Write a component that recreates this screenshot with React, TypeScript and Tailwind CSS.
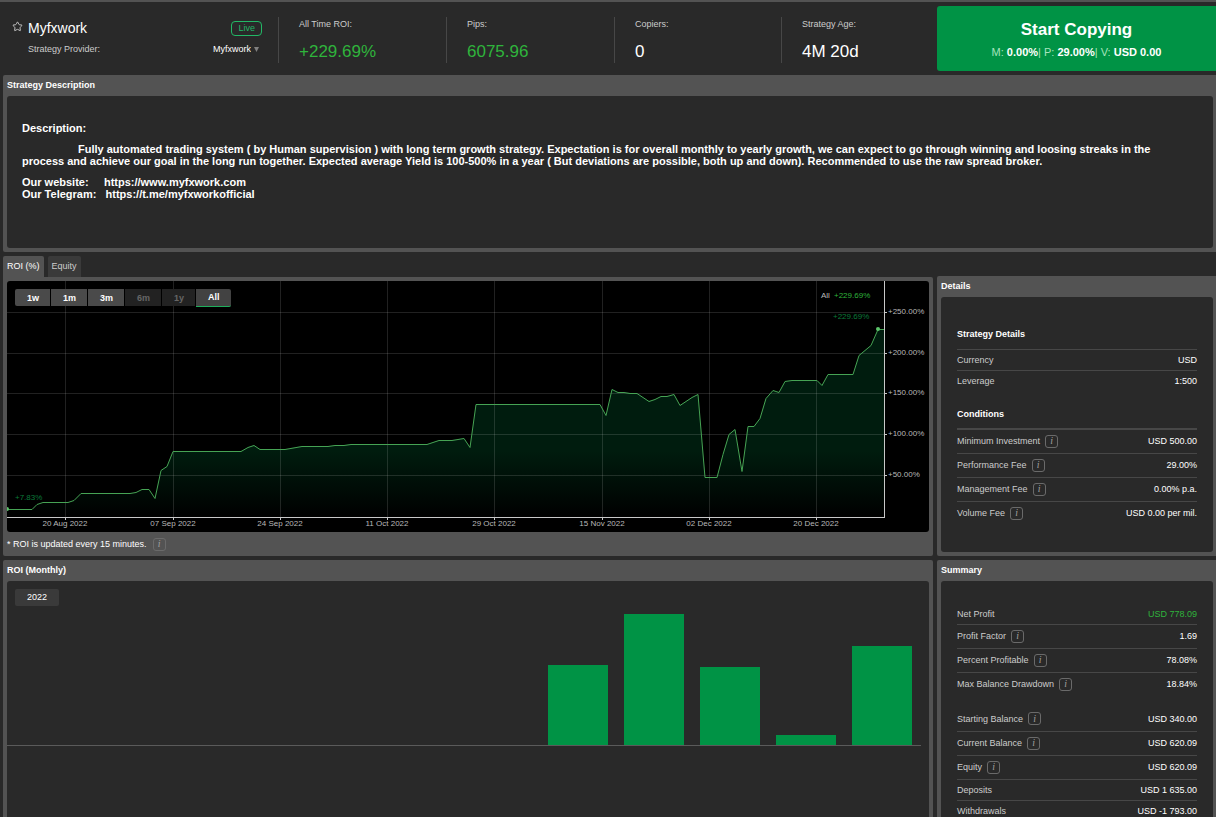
import React, { FC, ReactNode } from "react";

// icons
import { Star } from "lucide-react";

interface Row {
  label: string;
  value: string;
  info?: boolean;
  green?: boolean;
}

const stats = [
  { name: "All Time ROI:", value: "+229.69%", green: true },
  { name: "Pips:", value: "6075.96", green: true },
  { name: "Copiers:", value: "0", green: false },
  { name: "Strategy Age:", value: "4M 20d", green: false },
];

const ranges = [
  { name: "1w", disabled: false },
  { name: "1m", disabled: false },
  { name: "3m", disabled: false },
  { name: "6m", disabled: true },
  { name: "1y", disabled: true },
];

const strategyDetails: Row[] = [
  { label: "Currency", value: "USD" },
  { label: "Leverage", value: "1:500" },
];

const conditions: Row[] = [
  { label: "Minimum Investment", value: "USD 500.00", info: true },
  { label: "Performance Fee", value: "29.00%", info: true },
  { label: "Management Fee", value: "0.00% p.a.", info: true },
  { label: "Volume Fee", value: "USD 0.00 per mil.", info: true },
];

const profit: Row[] = [
  { label: "Net Profit", value: "USD 778.09", green: true },
  { label: "Profit Factor", value: "1.69", info: true },
  { label: "Percent Profitable", value: "78.08%", info: true },
  { label: "Max Balance Drawdown", value: "18.84%", info: true },
];

const balance: Row[] = [
  { label: "Starting Balance", value: "USD 340.00", info: true },
  { label: "Current Balance", value: "USD 620.09", info: true },
  { label: "Equity", value: "USD 620.09", info: true },
  { label: "Deposits", value: "USD 1 635.00" },
  { label: "Withdrawals", value: "USD -1 793.00" },
];

// bar heights in percent of the best month, January to December
const months = [0, 0, 0, 0, 0, 0, 0, 61, 100, 59.5, 7.6, 75.6];

const dates = [
  { x: 58, text: "20 Aug 2022" },
  { x: 166, text: "07 Sep 2022" },
  { x: 273, text: "24 Sep 2022" },
  { x: 380, text: "11 Oct 2022" },
  { x: 487, text: "29 Oct 2022" },
  { x: 595, text: "15 Nov 2022" },
  { x: 702, text: "02 Dec 2022" },
  { x: 809, text: "20 Dec 2022" },
];

const levels = [
  { y: 31, text: "+250.00%" },
  { y: 72, text: "+200.00%" },
  { y: 112, text: "+150.00%" },
  { y: 153, text: "+100.00%" },
  { y: 194, text: "+50.00%" },
];

const roiLine =
  "0,228 25,228 30,223 36,221 61,221 67,219 74,212 123,212 129,211 135,208 142,208 148,217 154,189 160,185 166,170 234,170 241,166 247,164 253,168 278,168 295,165 321,165 328,164 337,164 344,163 420,163 432,159 445,159 457,157 463,166 469,123 593,123 599,134 605,108 611,111 617,111 623,112 630,112 642,120 648,118 654,115 660,115 667,113 673,124 685,116 691,113 698,196 710,196 716,173 722,153 728,148 735,190 741,145 747,145 753,137 759,117 766,109 772,111 778,100 785,99 810,99 815,104 821,93 846,93 852,74 858,69 864,64 871,48 877,48";

const InfoIcon: FC = () => (
  <span
    aria-hidden="true"
    className="flex h-[13px] w-[13px] shrink-0 items-center justify-center rounded-[3px] border border-[#6a6a6a] font-['Liberation_Serif',serif] text-[10px] italic leading-none text-[#a0a0a0]"
  >
    i
  </span>
);

const Panel: FC<{ title: string; last?: boolean; children: ReactNode }> = ({ title, last, children }) => (
  <section className={`flex flex-1 flex-col bg-[#535353] pl-1 ${last ? "rounded-l-xs pr-[3px]" : "rounded-xs pr-1"}`}>
    <h2 className="h-[21px] text-[9px] font-bold leading-[20px] text-white">{title}</h2>
    {children}
  </section>
);

const Rows: FC<{ rows: Row[]; firstLine?: boolean }> = ({ rows, firstLine }) => (
  <dl>
    {rows.map((row, i) => (
      <div
        key={row.label}
        className={`flex items-center justify-between ${row.info ? "h-6 pb-px" : "h-[21px]"} ${
          i > 0 || firstLine ? "border-t border-[#474747]" : ""
        }`}
      >
        <dt className="flex items-center gap-[5px] text-[#cccccc]">
          {row.label}
          {row.info && <InfoIcon />}
        </dt>
        <dd className={row.green ? "text-[#2fb43c]" : "text-white"}>{row.value}</dd>
      </div>
    ))}
  </dl>
);

const Header: FC = () => (
  <header className="flex h-[75px] border-t-2 border-[#535353]">
    <div className="grid flex-1 grid-cols-[278fr_168fr_168fr_167fr_156fr] pt-[15px]">
      <div className="flex pl-3 pr-4">
        <Star className="mt-1 mr-[5px] shrink-0 text-[#cccccc]" size={11} strokeWidth={2} />
        <div className="flex flex-1 flex-col">
          <div className="flex h-[22px] items-center justify-between">
            <h1 className="text-[14px] leading-none text-white">Myfxwork</h1>
            <span className="rounded-[4px] border border-[#22b866] px-1.5 leading-[13px] text-[#22b866]">Live</span>
          </div>
          <div className="flex h-5 items-center justify-between">
            <label htmlFor="provider" className="text-[#cccccc]">
              Strategy Provider:
            </label>
            <div className="flex items-center gap-[3px] pr-[3px]">
              <select id="provider" className="appearance-none bg-[#292929] text-white">
                <option>Myfxwork</option>
              </select>
              <svg width="5" height="5" viewBox="0 0 5 5" fill="#808080">
                <path d="M0 0h5L2.5 5z" />
              </svg>
            </div>
          </div>
        </div>
      </div>
      {stats.map((item) => (
        <div key={item.name} className="h-[46px] border-l border-[#474747] pl-5">
          <div className="leading-[14px] text-[#cccccc]">{item.name}</div>
          <div className={`mt-[11px] text-[17px] leading-5 ${item.green ? "text-[#2fb43c]" : "text-white"}`}>
            {item.value}
          </div>
        </div>
      ))}
    </div>
    <button className="my-1 w-[279px] rounded-l-[3px] bg-[#009345] text-white">
      <span className="block text-[17px] font-bold leading-6">Start Copying</span>
      <span className="block pt-0.5 text-[11px] leading-4 text-[#a5e3bd]">
        M: <b className="text-white">0.00%</b>| P: <b className="text-white">29.00%</b>| V:{" "}
        <b className="text-white">USD 0.00</b>
      </span>
    </button>
  </header>
);

const RoiChart: FC = () => (
  <div className="relative overflow-hidden rounded-[3px] bg-black">
    <svg viewBox="0 0 922 251" className="block w-full" role="img" aria-label="ROI (%)">
      <defs>
        <linearGradient id="area" gradientUnits="userSpaceOnUse" x1="0" y1="48" x2="0" y2="236">
          <stop offset="0" stopColor="#001c0e" />
          <stop offset="0.65" stopColor="#001c0e" />
          <stop offset="1" stopColor="#000000" />
        </linearGradient>
      </defs>
      <polygon points={`${roiLine} 877,236 0,236`} fill="url(#area)" />
      <g stroke="#ffffff" strokeOpacity="0.13" shapeRendering="crispEdges">
        {dates.map((d) => (
          <line key={d.x} x1={d.x + 0.5} x2={d.x + 0.5} y1="0" y2="236" />
        ))}
        {levels.map((l) => (
          <line key={l.y} x1="0" x2="877" y1={l.y + 0.5} y2={l.y + 0.5} />
        ))}
      </g>
      <g stroke="#c8c8c8" shapeRendering="crispEdges">
        <line x1="0" x2="878" y1="236.5" y2="236.5" />
        <line x1="877.5" x2="877.5" y1="0" y2="236" />
        {dates.map((d) => (
          <line key={d.x} x1={d.x + 0.5} x2={d.x + 0.5} y1="236" y2="239" />
        ))}
        {levels.map((l) => (
          <line key={l.y} x1="877" x2="880" y1={l.y + 0.5} y2={l.y + 0.5} />
        ))}
      </g>
      <polyline points={roiLine} fill="none" stroke="#46a354" strokeWidth="1" transform="translate(0 0.5)" />
      <circle cx="871" cy="48" r="2" fill="#5cc46a" />
      <circle cx="0" cy="228" r="2" fill="#5cc46a" />
      <g fontSize="8" fill="#b8b8b8">
        {dates.map((d) => (
          <text key={d.x} x={d.x} y="245" textAnchor="middle">
            {d.text}
          </text>
        ))}
        {levels.map((l) => (
          <text key={l.y} x="881" y={l.y + 2}>
            {l.text}
          </text>
        ))}
        <text x="814" y="17">
          All
        </text>
        <text x="827" y="17" fill="#2fb43c">
          +229.69%
        </text>
        <text x="826" y="38" fill="#0b7a3a">
          +229.69%
        </text>
        <text x="8" y="219" fill="#0b7a3a">
          +7.83%
        </text>
      </g>
    </svg>
    {/* range buttons */}
    <div className="absolute left-2 top-2 flex h-[18px] font-bold">
      {ranges.map((r) => (
        <button
          key={r.name}
          disabled={r.disabled}
          className="h-[17px] border-r border-black bg-[#4a4a4a] pl-3 pr-[11px] text-white first:rounded-l-xs disabled:bg-[#222222] disabled:text-[#666666]"
        >
          {r.name}
        </button>
      ))}
      <button className="h-[18px] rounded-r-xs border-b border-[#1fae5c] bg-[#424242] pl-3 pr-[11px] pb-px text-white">
        All
      </button>
    </div>
  </div>
);

const App: FC = () => {
  return (
    <div className="flex min-h-screen flex-col bg-[#292929] font-['Liberation_Sans',Arial,sans-serif] text-[9px] leading-3">
      <Header />

      <main className="flex flex-1 flex-col pl-[3px]">
        <section className="rounded-l-xs bg-[#535353] pb-1 pl-1 pr-[3px]">
          <h2 className="h-[21px] font-bold leading-[20px] text-white">Strategy Description</h2>
          <div className="min-h-[152px] space-y-[9px] rounded-[3px] bg-[#292929] pl-[15px] pr-8 pt-[26px] text-[11px] font-bold text-white">
            <p>Description:</p>
            <p className="indent-14">
              Fully automated trading system ( by Human supervision ) with long term growth strategy. Expectation is for
              overall monthly to yearly growth, we can expect to go through winning and loosing streaks in the process
              and achieve our goal in the long run together. Expected average Yield is 100-500% in a year ( But
              deviations are possible, both up and down). Recommended to use the raw spread broker.
            </p>
            <p>
              Our website:&nbsp;&nbsp;&nbsp;&nbsp; <a href="https://www.myfxwork.com">https://www.myfxwork.com</a>
              <br />
              Our Telegram:&nbsp;&nbsp; <a href="https://t.me/myfxworkofficial">https://t.me/myfxworkofficial</a>
            </p>
          </div>
        </section>

        <div className="mt-1 flex gap-1">
          <div className="min-w-0 flex-1">
            <div className="flex h-[21px] gap-1">
              <button className="rounded-t-xs bg-[#535353] px-1 pb-px text-white">ROI (%)</button>
              <button className="rounded-t-xs bg-[#3a3a3a] px-1 pb-px text-[#cccccc]">Equity</button>
            </div>
            <section className="rounded-xs rounded-tl-none bg-[#535353] px-1 pt-1">
              <RoiChart />
              <p className="flex h-6 items-center gap-[6px] text-white">
                * ROI is updated every 15 minutes. <InfoIcon />
              </p>
            </section>
          </div>

          <aside className="flex w-[279px] flex-col pt-5">
            <Panel title="Details" last>
              <div className="mb-1 flex-1 rounded-[3px] bg-[#292929] px-4 pt-[23px]">
                <h3 className="h-[29px] font-bold leading-[29px] text-white">Strategy Details</h3>
                <Rows rows={strategyDetails} firstLine />
                <h3 className="mt-[9px] h-[29px] border-b border-[#474747] font-bold leading-[28px] text-white">
                  Conditions
                </h3>
                <Rows rows={conditions} firstLine />
              </div>
            </Panel>
          </aside>
        </div>

        <div className="mt-1 flex flex-1 gap-1">
          <div className="flex min-w-0 flex-1 flex-col">
            <Panel title="ROI (Monthly)">
              <div className="flex-1 rounded-t-[3px] bg-[#292929] pt-2 pr-2">
                <button className="ml-2 block h-[17px] rounded-xs bg-[#3a3a3a] px-3 pb-px text-white">2022</button>
                <div className="mt-2 grid h-[132px] grid-cols-12 border-b border-[#5a5a5a] px-px">
                  {months.map((height, i) => (
                    <div key={i} className="flex items-end px-2">
                      <div className="w-full bg-[#009345]" style={{ height: `${height}%` }} />
                    </div>
                  ))}
                </div>
              </div>
            </Panel>
          </div>

          <aside className="flex w-[279px] flex-col">
            <Panel title="Summary" last>
              <div className="flex-1 space-y-[11px] rounded-t-[3px] bg-[#292929] px-4 pt-[22px]">
                <Rows rows={profit} />
                <Rows rows={balance} />
              </div>
            </Panel>
          </aside>
        </div>
      </main>
    </div>
  );
};

export default App;
